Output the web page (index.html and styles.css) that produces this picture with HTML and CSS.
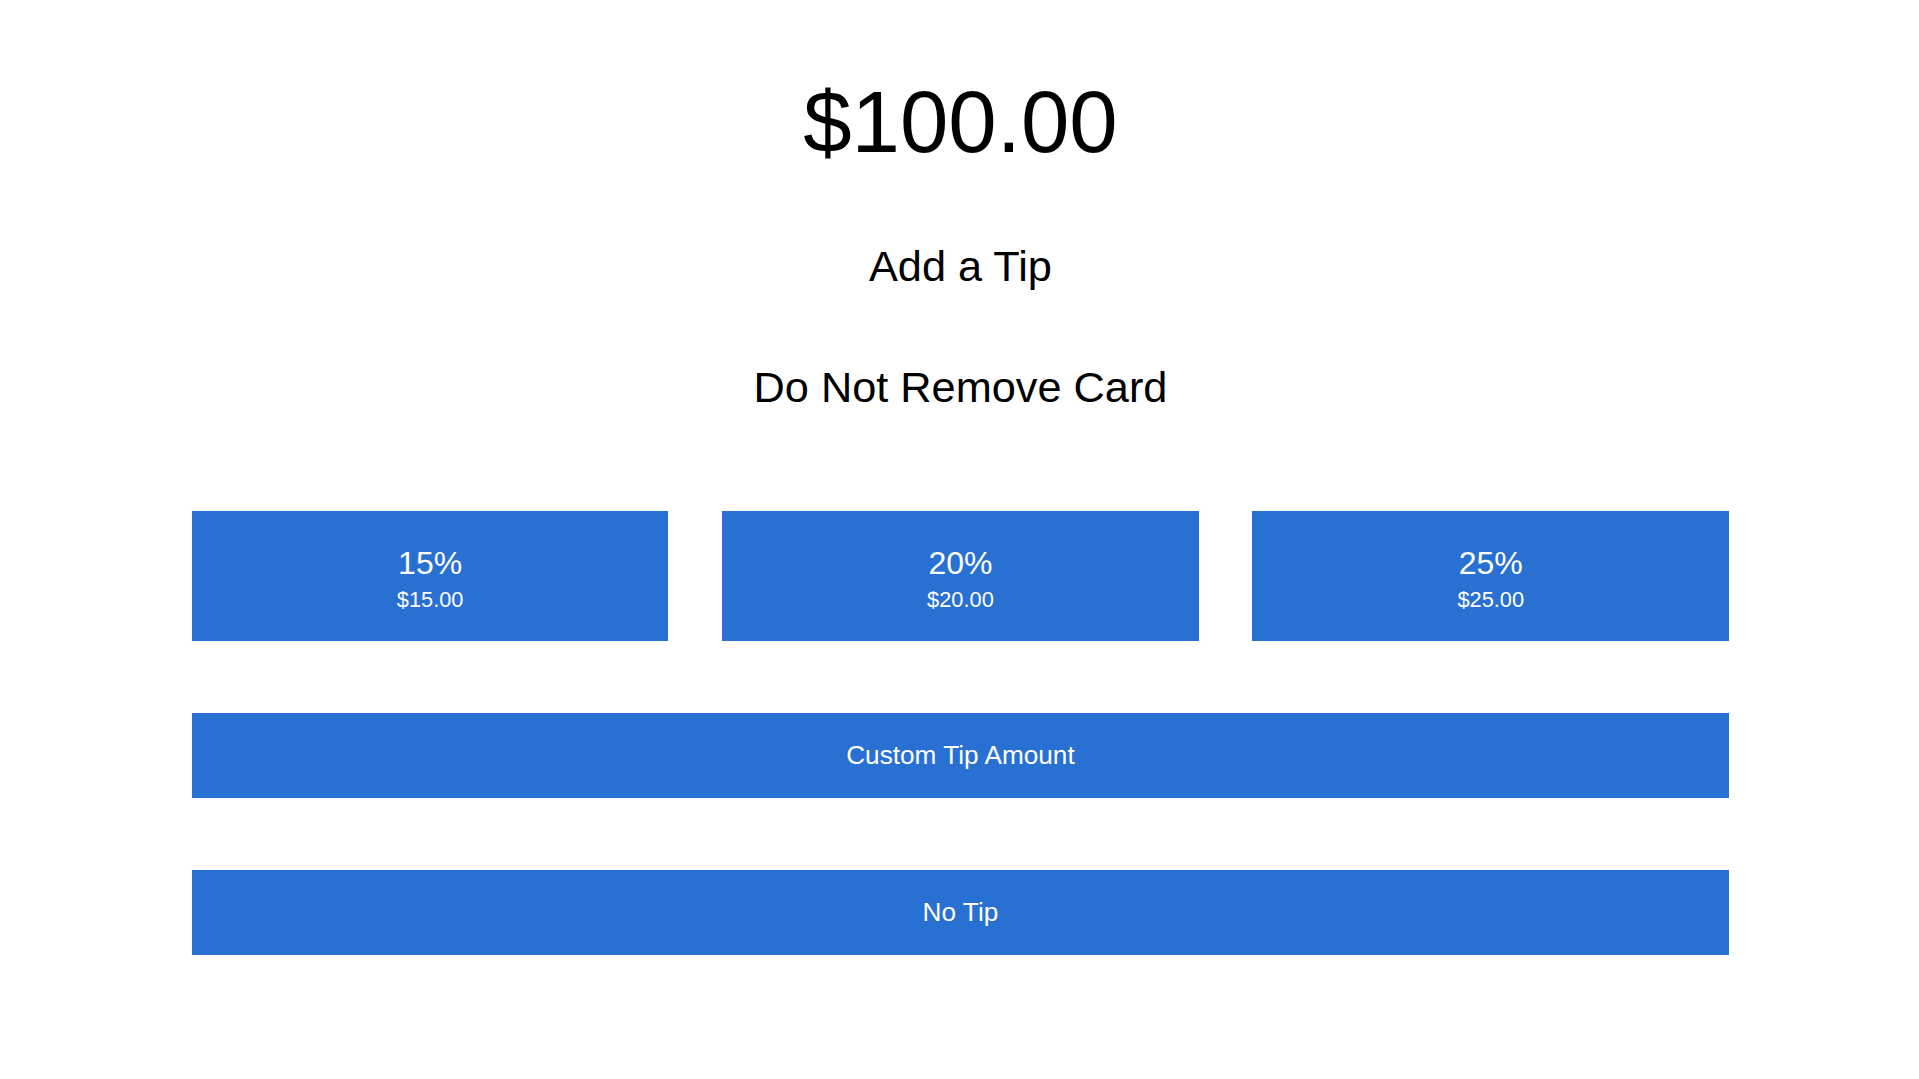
FILE: index.html
```html
<!DOCTYPE html>
<html lang="en">
<head>
<meta charset="utf-8">
<title>Add a Tip</title>
<link rel="stylesheet" href="styles.css">
</head>
<body>
<main class="screen">
  <div class="amount">$100.00</div>
  <h1 class="title">Add a Tip</h1>
  <p class="notice">Do Not Remove Card</p>
  <div class="tips">
    <button class="btn tip"><span class="pct">15%</span><span class="val">$15.00</span></button>
    <button class="btn tip"><span class="pct">20%</span><span class="val">$20.00</span></button>
    <button class="btn tip"><span class="pct">25%</span><span class="val">$25.00</span></button>
  </div>
  <button class="btn wide">Custom Tip Amount</button>
  <button class="btn wide">No Tip</button>
</main>
</body>
</html>
```
FILE: styles.css
```css
html, body {
  margin: 0;
  padding: 0;
  background: #ffffff;
}
body {
  font-family: "Liberation Sans", Arial, sans-serif;
  color: #000;
}
.screen {
  width: 80.1%;
  margin: 0 0 0 10%;
  display: flex;
  flex-direction: column;
  align-items: stretch;
  padding-top: 72px;
}
.amount {
  font-size: 87px;
  line-height: 100px;
  text-align: center;
}
.title {
  margin: 69px 0 0;
  font-size: 43.3px;
  font-weight: normal;
  line-height: 50px;
  text-align: center;
}
.notice {
  margin: 71px 0 0;
  font-size: 43.3px;
  line-height: 50px;
  text-align: center;
}
.tips {
  margin-top: 99px;
  display: flex;
  justify-content: space-between;
}
.btn {
  border: 0;
  margin: 0;
  padding: 0;
  background: #2970d3;
  color: #fff;
  font-family: "Liberation Sans", Arial, sans-serif;
  cursor: pointer;
}
.tip {
  width: 31%;
  height: 130px;
  padding-top: 4px;
  display: flex;
  flex-direction: column;
  align-items: center;
  justify-content: center;
}
.pct {
  font-size: 32px;
  line-height: 36px;
}
.val {
  margin-top: 7px;
  font-size: 21.8px;
  line-height: 24px;
}
.wide {
  margin-top: 72px;
  height: 85px;
  font-size: 26.2px;
}
```
